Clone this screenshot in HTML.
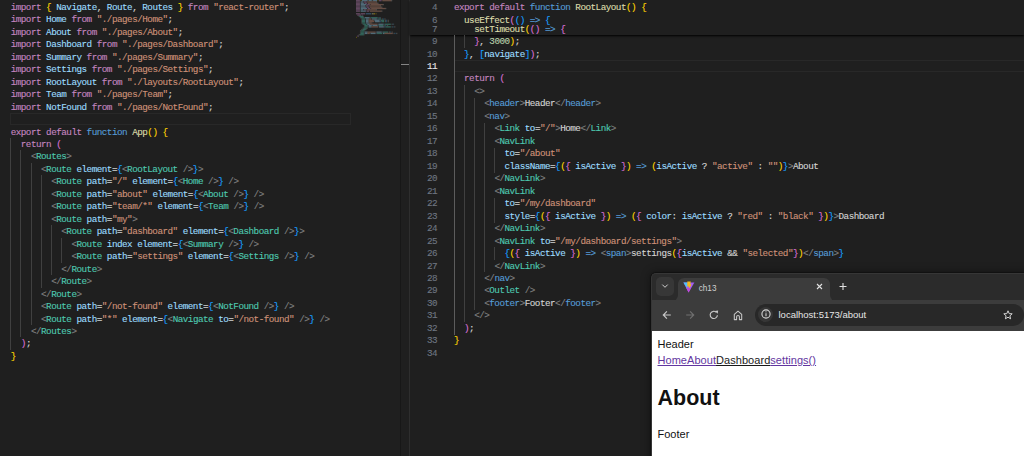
<!DOCTYPE html>
<html><head><meta charset="utf-8"><style>
*{margin:0;padding:0;box-sizing:border-box}
html,body{width:1024px;height:456px;overflow:hidden;background:#1f1f1f}
body{position:relative;font-family:"Liberation Mono",monospace}
.ln{position:absolute;-webkit-text-stroke:0.12px currentColor;white-space:pre;font-size:9.3px;line-height:12.47px;height:12.47px;letter-spacing:-0.52px}
.num{position:absolute;-webkit-text-stroke:0.12px currentColor;width:40px;text-align:right;white-space:pre;font-size:9.3px;line-height:12.47px;height:12.47px;letter-spacing:-0.52px;color:#6e7681}
.num.act{color:#e6e6e6}
.g{position:absolute;width:1px;background:#404040;z-index:2}
.ga{background:#5c5c5c}
.cur{position:absolute;border:1px solid #282828}
.mm{position:absolute;height:1.05px;opacity:.55}
#sticky{position:absolute;left:410px;top:0;width:614px;height:35px;background:#1f1f1f;overflow:hidden;box-shadow:0 1px 2px 0 #000}
.k{color:#c586c0}.f{color:#569cd6}.v{color:#9cdcfe}.s{color:#ce9178}.c{color:#4ec9b0}.y{color:#dcdcaa}
.g2{color:#808080}
.w{color:#d4d4d4}.n{color:#b5cea8}.b1{color:#ffd700}.b2{color:#da70d6}.b3{color:#179fff}
.mk{background:#c586c0}.mf{background:#569cd6}.mv{background:#9cdcfe}.ms{background:#ce9178}.mc{background:#4ec9b0}.my{background:#dcdcaa}
.mg{background:#808080}.mw{background:#cccccc}.mn{background:#b5cea8}.mb1{background:#ffd700}.mb2{background:#da70d6}.mb3{background:#179fff}
</style></head>
<body>
<div class="g" style="left:10px;top:137.97px;height:211.99px"></div>
<div class="g" style="left:20px;top:150.44px;height:187.05px"></div>
<div class="g" style="left:31px;top:162.91px;height:162.11px"></div>
<div class="g" style="left:41px;top:175.38px;height:112.23px"></div>
<div class="g" style="left:51px;top:225.26px;height:49.88px"></div>
<div class="g" style="left:61px;top:237.73px;height:24.94px"></div>
<div class="ln" style="left:10.7px;top:1.8px"><span class="k">import</span><span class="w"> </span><span class="b1">{</span><span class="w"> </span><span class="v">Navigate</span><span class="w">, </span><span class="v">Route</span><span class="w">, </span><span class="v">Routes</span><span class="w"> </span><span class="b1">}</span><span class="w"> </span><span class="k">from</span><span class="w"> </span><span class="s">"react-router"</span><span class="w">;</span></div>
<div class="ln" style="left:10.7px;top:14.27px"><span class="k">import</span><span class="w"> </span><span class="v">Home</span><span class="w"> </span><span class="k">from</span><span class="w"> </span><span class="s">"./pages/Home"</span><span class="w">;</span></div>
<div class="ln" style="left:10.7px;top:26.74px"><span class="k">import</span><span class="w"> </span><span class="v">About</span><span class="w"> </span><span class="k">from</span><span class="w"> </span><span class="s">"./pages/About"</span><span class="w">;</span></div>
<div class="ln" style="left:10.7px;top:39.21px"><span class="k">import</span><span class="w"> </span><span class="v">Dashboard</span><span class="w"> </span><span class="k">from</span><span class="w"> </span><span class="s">"./pages/Dashboard"</span><span class="w">;</span></div>
<div class="ln" style="left:10.7px;top:51.68px"><span class="k">import</span><span class="w"> </span><span class="v">Summary</span><span class="w"> </span><span class="k">from</span><span class="w"> </span><span class="s">"./pages/Summary"</span><span class="w">;</span></div>
<div class="ln" style="left:10.7px;top:64.15px"><span class="k">import</span><span class="w"> </span><span class="v">Settings</span><span class="w"> </span><span class="k">from</span><span class="w"> </span><span class="s">"./pages/Settings"</span><span class="w">;</span></div>
<div class="ln" style="left:10.7px;top:76.62px"><span class="k">import</span><span class="w"> </span><span class="v">RootLayout</span><span class="w"> </span><span class="k">from</span><span class="w"> </span><span class="s">"./layouts/RootLayout"</span><span class="w">;</span></div>
<div class="ln" style="left:10.7px;top:89.09px"><span class="k">import</span><span class="w"> </span><span class="v">Team</span><span class="w"> </span><span class="k">from</span><span class="w"> </span><span class="s">"./pages/Team"</span><span class="w">;</span></div>
<div class="ln" style="left:10.7px;top:101.56px"><span class="k">import</span><span class="w"> </span><span class="v">NotFound</span><span class="w"> </span><span class="k">from</span><span class="w"> </span><span class="s">"./pages/NotFound"</span><span class="w">;</span></div>
<div class="ln" style="left:10.7px;top:126.5px"><span class="k">export</span><span class="w"> </span><span class="k">default</span><span class="w"> </span><span class="f">function</span><span class="w"> </span><span class="y">App</span><span class="b1">()</span><span class="w"> </span><span class="b1">{</span></div>
<div class="ln" style="left:10.7px;top:138.97px"><span class="w">  </span><span class="k">return</span><span class="w"> </span><span class="b2">(</span></div>
<div class="ln" style="left:10.7px;top:151.44px"><span class="w">    </span><span class="g2">&lt;</span><span class="c">Routes</span><span class="g2">&gt;</span></div>
<div class="ln" style="left:10.7px;top:163.91px"><span class="w">      </span><span class="g2">&lt;</span><span class="c">Route</span><span class="w"> </span><span class="v">element</span><span class="w">=</span><span class="b3">{</span><span class="g2">&lt;</span><span class="c">RootLayout</span><span class="w"> </span><span class="g2">/&gt;</span><span class="b3">}</span><span class="g2">&gt;</span></div>
<div class="ln" style="left:10.7px;top:176.38px"><span class="w">        </span><span class="g2">&lt;</span><span class="c">Route</span><span class="w"> </span><span class="v">path</span><span class="w">=</span><span class="s">"/"</span><span class="w"> </span><span class="v">element</span><span class="w">=</span><span class="b3">{</span><span class="g2">&lt;</span><span class="c">Home</span><span class="w"> </span><span class="g2">/&gt;</span><span class="b3">}</span><span class="w"> </span><span class="g2">/&gt;</span></div>
<div class="ln" style="left:10.7px;top:188.85px"><span class="w">        </span><span class="g2">&lt;</span><span class="c">Route</span><span class="w"> </span><span class="v">path</span><span class="w">=</span><span class="s">"about"</span><span class="w"> </span><span class="v">element</span><span class="w">=</span><span class="b3">{</span><span class="g2">&lt;</span><span class="c">About</span><span class="w"> </span><span class="g2">/&gt;</span><span class="b3">}</span><span class="w"> </span><span class="g2">/&gt;</span></div>
<div class="ln" style="left:10.7px;top:201.32px"><span class="w">        </span><span class="g2">&lt;</span><span class="c">Route</span><span class="w"> </span><span class="v">path</span><span class="w">=</span><span class="s">"team/*"</span><span class="w"> </span><span class="v">element</span><span class="w">=</span><span class="b3">{</span><span class="g2">&lt;</span><span class="c">Team</span><span class="w"> </span><span class="g2">/&gt;</span><span class="b3">}</span><span class="w"> </span><span class="g2">/&gt;</span></div>
<div class="ln" style="left:10.7px;top:213.79px"><span class="w">        </span><span class="g2">&lt;</span><span class="c">Route</span><span class="w"> </span><span class="v">path</span><span class="w">=</span><span class="s">"my"</span><span class="g2">&gt;</span></div>
<div class="ln" style="left:10.7px;top:226.26px"><span class="w">          </span><span class="g2">&lt;</span><span class="c">Route</span><span class="w"> </span><span class="v">path</span><span class="w">=</span><span class="s">"dashboard"</span><span class="w"> </span><span class="v">element</span><span class="w">=</span><span class="b3">{</span><span class="g2">&lt;</span><span class="c">Dashboard</span><span class="w"> </span><span class="g2">/&gt;</span><span class="b3">}</span><span class="g2">&gt;</span></div>
<div class="ln" style="left:10.7px;top:238.73px"><span class="w">            </span><span class="g2">&lt;</span><span class="c">Route</span><span class="w"> </span><span class="v">index</span><span class="w"> </span><span class="v">element</span><span class="w">=</span><span class="b3">{</span><span class="g2">&lt;</span><span class="c">Summary</span><span class="w"> </span><span class="g2">/&gt;</span><span class="b3">}</span><span class="w"> </span><span class="g2">/&gt;</span></div>
<div class="ln" style="left:10.7px;top:251.2px"><span class="w">            </span><span class="g2">&lt;</span><span class="c">Route</span><span class="w"> </span><span class="v">path</span><span class="w">=</span><span class="s">"settings"</span><span class="w"> </span><span class="v">element</span><span class="w">=</span><span class="b3">{</span><span class="g2">&lt;</span><span class="c">Settings</span><span class="w"> </span><span class="g2">/&gt;</span><span class="b3">}</span><span class="w"> </span><span class="g2">/&gt;</span></div>
<div class="ln" style="left:10.7px;top:263.67px"><span class="w">          </span><span class="g2">&lt;/</span><span class="c">Route</span><span class="g2">&gt;</span></div>
<div class="ln" style="left:10.7px;top:276.14px"><span class="w">        </span><span class="g2">&lt;/</span><span class="c">Route</span><span class="g2">&gt;</span></div>
<div class="ln" style="left:10.7px;top:288.61px"><span class="w">      </span><span class="g2">&lt;/</span><span class="c">Route</span><span class="g2">&gt;</span></div>
<div class="ln" style="left:10.7px;top:301.08px"><span class="w">      </span><span class="g2">&lt;</span><span class="c">Route</span><span class="w"> </span><span class="v">path</span><span class="w">=</span><span class="s">"/not-found"</span><span class="w"> </span><span class="v">element</span><span class="w">=</span><span class="b3">{</span><span class="g2">&lt;</span><span class="c">NotFound</span><span class="w"> </span><span class="g2">/&gt;</span><span class="b3">}</span><span class="w"> </span><span class="g2">/&gt;</span></div>
<div class="ln" style="left:10.7px;top:313.55px"><span class="w">      </span><span class="g2">&lt;</span><span class="c">Route</span><span class="w"> </span><span class="v">path</span><span class="w">=</span><span class="s">"*"</span><span class="w"> </span><span class="v">element</span><span class="w">=</span><span class="b3">{</span><span class="g2">&lt;</span><span class="c">Navigate</span><span class="w"> </span><span class="v">to</span><span class="w">=</span><span class="s">"/not-found"</span><span class="w"> </span><span class="g2">/&gt;</span><span class="b3">}</span><span class="w"> </span><span class="g2">/&gt;</span></div>
<div class="ln" style="left:10.7px;top:326.02px"><span class="w">    </span><span class="g2">&lt;/</span><span class="c">Routes</span><span class="g2">&gt;</span></div>
<div class="ln" style="left:10.7px;top:338.49px"><span class="w">  </span><span class="b2">)</span><span class="w">;</span></div>
<div class="ln" style="left:10.7px;top:350.96px"><span class="b1">}</span></div>
<div class="cur" style="left:10px;top:113px;width:341px;height:12px"></div>
<div style="position:absolute;left:0;top:0;opacity:.4"><svg style="position:absolute;left:356px;top:0" width="46" height="40" viewBox="0 0 70 61" preserveAspectRatio="none"><rect x="0" y="0" width="6" height="2" fill="#c586c0"/><rect x="7" y="0" width="1" height="2" fill="#ffd700"/><rect x="9" y="0" width="8" height="2" fill="#9cdcfe"/><rect x="17" y="0" width="1" height="2" fill="#cccccc"/><rect x="19" y="0" width="5" height="2" fill="#9cdcfe"/><rect x="24" y="0" width="1" height="2" fill="#cccccc"/><rect x="26" y="0" width="6" height="2" fill="#9cdcfe"/><rect x="33" y="0" width="1" height="2" fill="#ffd700"/><rect x="35" y="0" width="4" height="2" fill="#c586c0"/><rect x="40" y="0" width="14" height="2" fill="#ce9178"/><rect x="54" y="0" width="1" height="2" fill="#cccccc"/><rect x="0" y="2" width="6" height="2" fill="#c586c0"/><rect x="7" y="2" width="4" height="2" fill="#9cdcfe"/><rect x="12" y="2" width="4" height="2" fill="#c586c0"/><rect x="17" y="2" width="14" height="2" fill="#ce9178"/><rect x="31" y="2" width="1" height="2" fill="#cccccc"/><rect x="0" y="4" width="6" height="2" fill="#c586c0"/><rect x="7" y="4" width="5" height="2" fill="#9cdcfe"/><rect x="13" y="4" width="4" height="2" fill="#c586c0"/><rect x="18" y="4" width="15" height="2" fill="#ce9178"/><rect x="33" y="4" width="1" height="2" fill="#cccccc"/><rect x="0" y="6" width="6" height="2" fill="#c586c0"/><rect x="7" y="6" width="9" height="2" fill="#9cdcfe"/><rect x="17" y="6" width="4" height="2" fill="#c586c0"/><rect x="22" y="6" width="19" height="2" fill="#ce9178"/><rect x="41" y="6" width="1" height="2" fill="#cccccc"/><rect x="0" y="8" width="6" height="2" fill="#c586c0"/><rect x="7" y="8" width="7" height="2" fill="#9cdcfe"/><rect x="15" y="8" width="4" height="2" fill="#c586c0"/><rect x="20" y="8" width="17" height="2" fill="#ce9178"/><rect x="37" y="8" width="1" height="2" fill="#cccccc"/><rect x="0" y="10" width="6" height="2" fill="#c586c0"/><rect x="7" y="10" width="8" height="2" fill="#9cdcfe"/><rect x="16" y="10" width="4" height="2" fill="#c586c0"/><rect x="21" y="10" width="18" height="2" fill="#ce9178"/><rect x="39" y="10" width="1" height="2" fill="#cccccc"/><rect x="0" y="12" width="6" height="2" fill="#c586c0"/><rect x="7" y="12" width="10" height="2" fill="#9cdcfe"/><rect x="18" y="12" width="4" height="2" fill="#c586c0"/><rect x="23" y="12" width="22" height="2" fill="#ce9178"/><rect x="45" y="12" width="1" height="2" fill="#cccccc"/><rect x="0" y="14" width="6" height="2" fill="#c586c0"/><rect x="7" y="14" width="4" height="2" fill="#9cdcfe"/><rect x="12" y="14" width="4" height="2" fill="#c586c0"/><rect x="17" y="14" width="14" height="2" fill="#ce9178"/><rect x="31" y="14" width="1" height="2" fill="#cccccc"/><rect x="0" y="16" width="6" height="2" fill="#c586c0"/><rect x="7" y="16" width="8" height="2" fill="#9cdcfe"/><rect x="16" y="16" width="4" height="2" fill="#c586c0"/><rect x="21" y="16" width="18" height="2" fill="#ce9178"/><rect x="39" y="16" width="1" height="2" fill="#cccccc"/><rect x="0" y="20" width="6" height="2" fill="#c586c0"/><rect x="7" y="20" width="7" height="2" fill="#c586c0"/><rect x="15" y="20" width="8" height="2" fill="#569cd6"/><rect x="24" y="20" width="3" height="2" fill="#dcdcaa"/><rect x="27" y="20" width="2" height="2" fill="#ffd700"/><rect x="30" y="20" width="1" height="2" fill="#ffd700"/><rect x="2" y="22" width="6" height="2" fill="#c586c0"/><rect x="9" y="22" width="1" height="2" fill="#da70d6"/><rect x="4" y="24" width="1" height="2" fill="#808080"/><rect x="5" y="24" width="6" height="2" fill="#4ec9b0"/><rect x="11" y="24" width="1" height="2" fill="#808080"/><rect x="6" y="26" width="1" height="2" fill="#808080"/><rect x="7" y="26" width="5" height="2" fill="#4ec9b0"/><rect x="13" y="26" width="7" height="2" fill="#9cdcfe"/><rect x="20" y="26" width="1" height="2" fill="#cccccc"/><rect x="21" y="26" width="1" height="2" fill="#179fff"/><rect x="22" y="26" width="1" height="2" fill="#808080"/><rect x="23" y="26" width="10" height="2" fill="#4ec9b0"/><rect x="34" y="26" width="2" height="2" fill="#808080"/><rect x="36" y="26" width="1" height="2" fill="#179fff"/><rect x="37" y="26" width="1" height="2" fill="#808080"/><rect x="8" y="28" width="1" height="2" fill="#808080"/><rect x="9" y="28" width="5" height="2" fill="#4ec9b0"/><rect x="15" y="28" width="4" height="2" fill="#9cdcfe"/><rect x="19" y="28" width="1" height="2" fill="#cccccc"/><rect x="20" y="28" width="3" height="2" fill="#ce9178"/><rect x="24" y="28" width="7" height="2" fill="#9cdcfe"/><rect x="31" y="28" width="1" height="2" fill="#cccccc"/><rect x="32" y="28" width="1" height="2" fill="#179fff"/><rect x="33" y="28" width="1" height="2" fill="#808080"/><rect x="34" y="28" width="4" height="2" fill="#4ec9b0"/><rect x="39" y="28" width="2" height="2" fill="#808080"/><rect x="41" y="28" width="1" height="2" fill="#179fff"/><rect x="43" y="28" width="2" height="2" fill="#808080"/><rect x="8" y="30" width="1" height="2" fill="#808080"/><rect x="9" y="30" width="5" height="2" fill="#4ec9b0"/><rect x="15" y="30" width="4" height="2" fill="#9cdcfe"/><rect x="19" y="30" width="1" height="2" fill="#cccccc"/><rect x="20" y="30" width="7" height="2" fill="#ce9178"/><rect x="28" y="30" width="7" height="2" fill="#9cdcfe"/><rect x="35" y="30" width="1" height="2" fill="#cccccc"/><rect x="36" y="30" width="1" height="2" fill="#179fff"/><rect x="37" y="30" width="1" height="2" fill="#808080"/><rect x="38" y="30" width="5" height="2" fill="#4ec9b0"/><rect x="44" y="30" width="2" height="2" fill="#808080"/><rect x="46" y="30" width="1" height="2" fill="#179fff"/><rect x="48" y="30" width="2" height="2" fill="#808080"/><rect x="8" y="32" width="1" height="2" fill="#808080"/><rect x="9" y="32" width="5" height="2" fill="#4ec9b0"/><rect x="15" y="32" width="4" height="2" fill="#9cdcfe"/><rect x="19" y="32" width="1" height="2" fill="#cccccc"/><rect x="20" y="32" width="8" height="2" fill="#ce9178"/><rect x="29" y="32" width="7" height="2" fill="#9cdcfe"/><rect x="36" y="32" width="1" height="2" fill="#cccccc"/><rect x="37" y="32" width="1" height="2" fill="#179fff"/><rect x="38" y="32" width="1" height="2" fill="#808080"/><rect x="39" y="32" width="4" height="2" fill="#4ec9b0"/><rect x="44" y="32" width="2" height="2" fill="#808080"/><rect x="46" y="32" width="1" height="2" fill="#179fff"/><rect x="48" y="32" width="2" height="2" fill="#808080"/><rect x="8" y="34" width="1" height="2" fill="#808080"/><rect x="9" y="34" width="5" height="2" fill="#4ec9b0"/><rect x="15" y="34" width="4" height="2" fill="#9cdcfe"/><rect x="19" y="34" width="1" height="2" fill="#cccccc"/><rect x="20" y="34" width="4" height="2" fill="#ce9178"/><rect x="24" y="34" width="1" height="2" fill="#808080"/><rect x="10" y="36" width="1" height="2" fill="#808080"/><rect x="11" y="36" width="5" height="2" fill="#4ec9b0"/><rect x="17" y="36" width="4" height="2" fill="#9cdcfe"/><rect x="21" y="36" width="1" height="2" fill="#cccccc"/><rect x="22" y="36" width="11" height="2" fill="#ce9178"/><rect x="34" y="36" width="7" height="2" fill="#9cdcfe"/><rect x="41" y="36" width="1" height="2" fill="#cccccc"/><rect x="42" y="36" width="1" height="2" fill="#179fff"/><rect x="43" y="36" width="1" height="2" fill="#808080"/><rect x="44" y="36" width="9" height="2" fill="#4ec9b0"/><rect x="54" y="36" width="2" height="2" fill="#808080"/><rect x="56" y="36" width="1" height="2" fill="#179fff"/><rect x="57" y="36" width="1" height="2" fill="#808080"/><rect x="12" y="38" width="1" height="2" fill="#808080"/><rect x="13" y="38" width="5" height="2" fill="#4ec9b0"/><rect x="19" y="38" width="5" height="2" fill="#9cdcfe"/><rect x="25" y="38" width="7" height="2" fill="#9cdcfe"/><rect x="32" y="38" width="1" height="2" fill="#cccccc"/><rect x="33" y="38" width="1" height="2" fill="#179fff"/><rect x="34" y="38" width="1" height="2" fill="#808080"/><rect x="35" y="38" width="7" height="2" fill="#4ec9b0"/><rect x="43" y="38" width="2" height="2" fill="#808080"/><rect x="45" y="38" width="1" height="2" fill="#179fff"/><rect x="47" y="38" width="2" height="2" fill="#808080"/><rect x="12" y="40" width="1" height="2" fill="#808080"/><rect x="13" y="40" width="5" height="2" fill="#4ec9b0"/><rect x="19" y="40" width="4" height="2" fill="#9cdcfe"/><rect x="23" y="40" width="1" height="2" fill="#cccccc"/><rect x="24" y="40" width="10" height="2" fill="#ce9178"/><rect x="35" y="40" width="7" height="2" fill="#9cdcfe"/><rect x="42" y="40" width="1" height="2" fill="#cccccc"/><rect x="43" y="40" width="1" height="2" fill="#179fff"/><rect x="44" y="40" width="1" height="2" fill="#808080"/><rect x="45" y="40" width="8" height="2" fill="#4ec9b0"/><rect x="54" y="40" width="2" height="2" fill="#808080"/><rect x="56" y="40" width="1" height="2" fill="#179fff"/><rect x="58" y="40" width="2" height="2" fill="#808080"/><rect x="10" y="42" width="2" height="2" fill="#808080"/><rect x="12" y="42" width="5" height="2" fill="#4ec9b0"/><rect x="17" y="42" width="1" height="2" fill="#808080"/><rect x="8" y="44" width="2" height="2" fill="#808080"/><rect x="10" y="44" width="5" height="2" fill="#4ec9b0"/><rect x="15" y="44" width="1" height="2" fill="#808080"/><rect x="6" y="46" width="2" height="2" fill="#808080"/><rect x="8" y="46" width="5" height="2" fill="#4ec9b0"/><rect x="13" y="46" width="1" height="2" fill="#808080"/><rect x="6" y="48" width="1" height="2" fill="#808080"/><rect x="7" y="48" width="5" height="2" fill="#4ec9b0"/><rect x="13" y="48" width="4" height="2" fill="#9cdcfe"/><rect x="17" y="48" width="1" height="2" fill="#cccccc"/><rect x="18" y="48" width="12" height="2" fill="#ce9178"/><rect x="31" y="48" width="7" height="2" fill="#9cdcfe"/><rect x="38" y="48" width="1" height="2" fill="#cccccc"/><rect x="39" y="48" width="1" height="2" fill="#179fff"/><rect x="40" y="48" width="1" height="2" fill="#808080"/><rect x="41" y="48" width="8" height="2" fill="#4ec9b0"/><rect x="50" y="48" width="2" height="2" fill="#808080"/><rect x="52" y="48" width="1" height="2" fill="#179fff"/><rect x="54" y="48" width="2" height="2" fill="#808080"/><rect x="6" y="50" width="1" height="2" fill="#808080"/><rect x="7" y="50" width="5" height="2" fill="#4ec9b0"/><rect x="13" y="50" width="4" height="2" fill="#9cdcfe"/><rect x="17" y="50" width="1" height="2" fill="#cccccc"/><rect x="18" y="50" width="3" height="2" fill="#ce9178"/><rect x="22" y="50" width="7" height="2" fill="#9cdcfe"/><rect x="29" y="50" width="1" height="2" fill="#cccccc"/><rect x="30" y="50" width="1" height="2" fill="#179fff"/><rect x="31" y="50" width="1" height="2" fill="#808080"/><rect x="32" y="50" width="8" height="2" fill="#4ec9b0"/><rect x="41" y="50" width="2" height="2" fill="#9cdcfe"/><rect x="43" y="50" width="1" height="2" fill="#cccccc"/><rect x="44" y="50" width="12" height="2" fill="#ce9178"/><rect x="57" y="50" width="2" height="2" fill="#808080"/><rect x="59" y="50" width="1" height="2" fill="#179fff"/><rect x="61" y="50" width="2" height="2" fill="#808080"/><rect x="4" y="52" width="2" height="2" fill="#808080"/><rect x="6" y="52" width="6" height="2" fill="#4ec9b0"/><rect x="12" y="52" width="1" height="2" fill="#808080"/><rect x="2" y="54" width="1" height="2" fill="#da70d6"/><rect x="3" y="54" width="1" height="2" fill="#cccccc"/><rect x="0" y="56" width="1" height="2" fill="#ffd700"/></svg></div>
<div style="position:absolute;left:400px;top:0;width:1px;height:456px;background:#171717"></div>
<div style="position:absolute;left:409px;top:0;width:1px;height:456px;background:#2e2e2e"></div>
<div style="position:absolute;left:401px;top:64.2px;width:8px;height:1.3px;background:#858585"></div>
<div class="g ga" style="left:454px;top:35.46px;height:299.28px"></div>
<div class="g" style="left:464px;top:35.46px;height:12.47px"></div>
<div class="g" style="left:464px;top:85.34px;height:236.93px"></div>
<div class="g" style="left:474px;top:97.81px;height:211.99px"></div>
<div class="g" style="left:484px;top:122.75px;height:149.64px"></div>
<div class="g" style="left:494px;top:147.69px;height:24.94px"></div>
<div class="g" style="left:494px;top:197.57px;height:24.94px"></div>
<div class="g" style="left:494px;top:247.45px;height:12.47px"></div>
<div class="num" style="left:397px;top:36.06px">9</div>
<div class="ln" style="left:453.9px;top:36.06px"><span class="w">    </span><span class="b2">}</span><span class="w">, </span><span class="n">3000</span><span class="b1">)</span><span class="w">;</span></div>
<div class="num" style="left:397px;top:48.53px">10</div>
<div class="ln" style="left:453.9px;top:48.53px"><span class="w">  </span><span class="b3">}</span><span class="w">, </span><span class="b3">[</span><span class="v">navigate</span><span class="b3">]</span><span class="b2">)</span><span class="w">;</span></div>
<div class="num act" style="left:397px;top:61px">11</div>
<div class="num" style="left:397px;top:73.47px">12</div>
<div class="ln" style="left:453.9px;top:73.47px"><span class="w">  </span><span class="k">return</span><span class="w"> </span><span class="b2">(</span></div>
<div class="num" style="left:397px;top:85.94px">13</div>
<div class="ln" style="left:453.9px;top:85.94px"><span class="w">    </span><span class="g2">&lt;&gt;</span></div>
<div class="num" style="left:397px;top:98.41px">14</div>
<div class="ln" style="left:453.9px;top:98.41px"><span class="w">      </span><span class="g2">&lt;</span><span class="f">header</span><span class="g2">&gt;</span><span class="w">Header</span><span class="g2">&lt;/</span><span class="f">header</span><span class="g2">&gt;</span></div>
<div class="num" style="left:397px;top:110.88px">15</div>
<div class="ln" style="left:453.9px;top:110.88px"><span class="w">      </span><span class="g2">&lt;</span><span class="f">nav</span><span class="g2">&gt;</span></div>
<div class="num" style="left:397px;top:123.35px">16</div>
<div class="ln" style="left:453.9px;top:123.35px"><span class="w">        </span><span class="g2">&lt;</span><span class="c">Link</span><span class="w"> </span><span class="v">to</span><span class="w">=</span><span class="s">"/"</span><span class="g2">&gt;</span><span class="w">Home</span><span class="g2">&lt;/</span><span class="c">Link</span><span class="g2">&gt;</span></div>
<div class="num" style="left:397px;top:135.82px">17</div>
<div class="ln" style="left:453.9px;top:135.82px"><span class="w">        </span><span class="g2">&lt;</span><span class="c">NavLink</span></div>
<div class="num" style="left:397px;top:148.29px">18</div>
<div class="ln" style="left:453.9px;top:148.29px"><span class="w">          </span><span class="v">to</span><span class="w">=</span><span class="s">"/about"</span></div>
<div class="num" style="left:397px;top:160.76px">19</div>
<div class="ln" style="left:453.9px;top:160.76px"><span class="w">          </span><span class="v">className</span><span class="w">=</span><span class="b3">{</span><span class="b1">(</span><span class="b2">{</span><span class="w"> </span><span class="v">isActive</span><span class="w"> </span><span class="b2">}</span><span class="b1">)</span><span class="w"> </span><span class="f">=&gt;</span><span class="w"> </span><span class="b1">(</span><span class="v">isActive</span><span class="w"> ? </span><span class="s">"active"</span><span class="w"> : </span><span class="s">""</span><span class="b1">)</span><span class="b3">}</span><span class="g2">&gt;</span><span class="w">About</span></div>
<div class="num" style="left:397px;top:173.23px">20</div>
<div class="ln" style="left:453.9px;top:173.23px"><span class="w">        </span><span class="g2">&lt;/</span><span class="c">NavLink</span><span class="g2">&gt;</span></div>
<div class="num" style="left:397px;top:185.7px">21</div>
<div class="ln" style="left:453.9px;top:185.7px"><span class="w">        </span><span class="g2">&lt;</span><span class="c">NavLink</span></div>
<div class="num" style="left:397px;top:198.17px">22</div>
<div class="ln" style="left:453.9px;top:198.17px"><span class="w">          </span><span class="v">to</span><span class="w">=</span><span class="s">"/my/dashboard"</span></div>
<div class="num" style="left:397px;top:210.64px">23</div>
<div class="ln" style="left:453.9px;top:210.64px"><span class="w">          </span><span class="v">style</span><span class="w">=</span><span class="b3">{</span><span class="b1">(</span><span class="b2">{</span><span class="w"> </span><span class="v">isActive</span><span class="w"> </span><span class="b2">}</span><span class="b1">)</span><span class="w"> </span><span class="f">=&gt;</span><span class="w"> </span><span class="b1">(</span><span class="b2">{</span><span class="w"> </span><span class="v">color</span><span class="w">: </span><span class="v">isActive</span><span class="w"> ? </span><span class="s">"red"</span><span class="w"> : </span><span class="s">"black"</span><span class="w"> </span><span class="b2">}</span><span class="b1">)</span><span class="b3">}</span><span class="g2">&gt;</span><span class="w">Dashboard</span></div>
<div class="num" style="left:397px;top:223.11px">24</div>
<div class="ln" style="left:453.9px;top:223.11px"><span class="w">        </span><span class="g2">&lt;/</span><span class="c">NavLink</span><span class="g2">&gt;</span></div>
<div class="num" style="left:397px;top:235.58px">25</div>
<div class="ln" style="left:453.9px;top:235.58px"><span class="w">        </span><span class="g2">&lt;</span><span class="c">NavLink</span><span class="w"> </span><span class="v">to</span><span class="w">=</span><span class="s">"/my/dashboard/settings"</span><span class="g2">&gt;</span></div>
<div class="num" style="left:397px;top:248.05px">26</div>
<div class="ln" style="left:453.9px;top:248.05px"><span class="w">          </span><span class="b3">{</span><span class="b1">(</span><span class="b2">{</span><span class="w"> </span><span class="v">isActive</span><span class="w"> </span><span class="b2">}</span><span class="b1">)</span><span class="w"> </span><span class="f">=&gt;</span><span class="w"> </span><span class="g2">&lt;</span><span class="f">span</span><span class="g2">&gt;</span><span class="w">settings</span><span class="b1">(</span><span class="b2">{</span><span class="v">isActive</span><span class="w"> &amp;&amp; </span><span class="s">"selected"</span><span class="b2">}</span><span class="b1">)</span><span class="g2">&lt;/</span><span class="f">span</span><span class="g2">&gt;</span><span class="b3">}</span></div>
<div class="num" style="left:397px;top:260.52px">27</div>
<div class="ln" style="left:453.9px;top:260.52px"><span class="w">        </span><span class="g2">&lt;/</span><span class="c">NavLink</span><span class="g2">&gt;</span></div>
<div class="num" style="left:397px;top:272.99px">28</div>
<div class="ln" style="left:453.9px;top:272.99px"><span class="w">      </span><span class="g2">&lt;/</span><span class="f">nav</span><span class="g2">&gt;</span></div>
<div class="num" style="left:397px;top:285.46px">29</div>
<div class="ln" style="left:453.9px;top:285.46px"><span class="w">      </span><span class="g2">&lt;</span><span class="c">Outlet</span><span class="w"> </span><span class="g2">/&gt;</span></div>
<div class="num" style="left:397px;top:297.93px">30</div>
<div class="ln" style="left:453.9px;top:297.93px"><span class="w">      </span><span class="g2">&lt;</span><span class="f">footer</span><span class="g2">&gt;</span><span class="w">Footer</span><span class="g2">&lt;/</span><span class="f">footer</span><span class="g2">&gt;</span></div>
<div class="num" style="left:397px;top:310.4px">31</div>
<div class="ln" style="left:453.9px;top:310.4px"><span class="w">    </span><span class="g2">&lt;/&gt;</span></div>
<div class="num" style="left:397px;top:322.87px">32</div>
<div class="ln" style="left:453.9px;top:322.87px"><span class="w">  </span><span class="b2">)</span><span class="w">;</span></div>
<div class="num" style="left:397px;top:335.34px">33</div>
<div class="ln" style="left:453.9px;top:335.34px"><span class="b1">}</span></div>
<div class="num" style="left:397px;top:347.81px">34</div>
<div class="cur" style="left:454px;top:60px;width:580px;height:12px"></div>
<div id="sticky"><div class="num" style="left:-13px;top:1.8px">4</div><div class="ln" style="left:43.9px;top:1.8px"><span class="k">export</span><span class="w"> </span><span class="k">default</span><span class="w"> </span><span class="f">function</span><span class="w"> </span><span class="y">RootLayout</span><span class="b1">()</span><span class="w"> </span><span class="b1">{</span></div><div class="num" style="left:-13px;top:14.6px">6</div><div class="ln" style="left:43.9px;top:14.6px"><span class="w">  </span><span class="y">useEffect</span><span class="b2">(</span><span class="b3">()</span><span class="w"> </span><span class="f">=&gt;</span><span class="w"> </span><span class="b3">{</span></div><div class="num" style="left:-13px;top:24.1px">7</div><div class="ln" style="left:43.9px;top:24.1px"><span class="w">    </span><span class="y">setTimeout</span><span class="b1">(</span><span class="b2">()</span><span class="w"> </span><span class="f">=&gt;</span><span class="w"> </span><span class="b2">{</span></div></div>
<style>
#win{position:absolute;left:650.5px;top:273px;width:380px;height:190px;border-radius:5px 0 0 0;background:#2b2b2b;box-shadow:0 0 1px 1px rgba(0,0,0,.35),0 0 8px 2px rgba(0,0,0,.3);overflow:hidden;font-family:"Liberation Sans",sans-serif;border-left:1px solid #363636;border-top:1px solid #363636}
#toolbar{position:absolute;left:0;top:26px;width:380px;height:31px;background:#3c3c3c}
#tabsearch{position:absolute;left:4px;top:3px;width:18.5px;height:19px;border-radius:5px;background:#373737}
#tab{position:absolute;left:26px;top:3.5px;width:152.5px;height:30px;background:#3c3c3c;border-radius:6px 6px 0 0}
#flareL{position:absolute;left:20px;top:21px;width:6px;height:6px;background:#3c3c3c}
#flareL:after{content:"";position:absolute;left:0;top:0;width:6px;height:6px;border-radius:0 0 6px 0;background:#2b2b2b}
#flareR{position:absolute;left:178.5px;top:21px;width:6px;height:6px;background:#3c3c3c}
#flareR:after{content:"";position:absolute;left:0;top:0;width:6px;height:6px;border-radius:0 0 0 6px;background:#2b2b2b}
#omni{position:absolute;left:103.5px;top:3.8px;width:268.5px;height:21.8px;border-radius:11px;background:#282828}
#infob{position:absolute;left:3px;top:2.9px;width:15.3px;height:15.3px;border-radius:50%;background:#363636}
#url{position:absolute;left:23.5px;top:4.1px;font-size:9.5px;line-height:14px;color:#e6e6e6;white-space:pre}
#title{position:absolute;left:47.2px;top:10.2px;font-size:8.2px;line-height:10px;color:#d0d0d0}
#content{position:absolute;left:0;top:56.5px;width:380px;height:140px;background:#fff;color:#000}
#content div{position:absolute;left:6px;white-space:pre;color:#111}
#content u{text-decoration-thickness:0.8px;text-underline-offset:1px}
.ic{position:absolute}
</style>
<div id="win">
  <div id="tabsearch"></div>
  <svg class="ic" style="left:9.5px;top:8.8px" width="8" height="6" viewBox="0 0 8 6"><path d="M1.3 1.6 L4 4.3 L6.7 1.6" fill="none" stroke="#d0d0d0" stroke-width="1"/></svg>
  <div id="tab"></div>
  <div id="flareL"></div>
  <div id="flareR"></div>
  <svg class="ic" style="left:31px;top:7px" width="12" height="12" viewBox="0 0 12 12">
    <path d="M0.4 1.6 L11.4 1.6 L5.6 11.6 Z" fill="#a35cf0"/>
    <path d="M3.2 7 L8 7 L5.6 11.6 Z" fill="#c04ad8"/>
    <path d="M0.4 1.6 L4.6 1.6 L4.2 7.2 Z" fill="#4cc4f7"/>
    <path d="M4.3 0.4 L7.8 0.4 L7.3 3.3 L8.4 3.3 L7.6 5.4 L5.8 7.4 L5.9 5.6 L4.3 5.6 Z" fill="#f2b81a"/>
  </svg>
  <div id="title">ch13</div>
  <svg class="ic" style="left:164px;top:9px" width="7" height="7" viewBox="0 0 7 7"><path d="M1 1 L6 6 M6 1 L1 6" stroke="#e0e0e0" stroke-width="1.1"/></svg>
  <svg class="ic" style="left:187.5px;top:8.3px" width="8" height="9" viewBox="0 0 8 8"><path d="M4 0.5 V7.5 M0.5 4 H7.5" stroke="#e0e0e0" stroke-width="1.1"/></svg>
  <div id="toolbar">
    <svg class="ic" style="left:10px;top:9.5px" width="10" height="10" viewBox="0 0 10 10"><path d="M8.8 5 H1.6 M4.9 1.4 L1.3 5 L4.9 8.6" fill="none" stroke="#c8c8c8" stroke-width="1.15"/></svg>
    <svg class="ic" style="left:33px;top:9.5px" width="10" height="10" viewBox="0 0 10 10"><path d="M1.2 5 H8.4 M5.1 1.4 L8.7 5 L5.1 8.6" fill="none" stroke="#707070" stroke-width="1.15"/></svg>
    <svg class="ic" style="left:57.5px;top:10px" width="10" height="10" viewBox="0 0 10 10"><path d="M8.4 5.2 A3.6 3.6 0 1 1 7.3 2.3" fill="none" stroke="#c8c8c8" stroke-width="1.15"/><path d="M5.9 1.0 L9.1 0.6 L8.7 3.8 Z" fill="#c8c8c8"/></svg>
    <svg class="ic" style="left:81.5px;top:9.8px" width="10" height="11" viewBox="0 0 10 11"><path d="M1.3 9.6 V4.3 L5 1.2 L8.7 4.3 V9.6 H6.4 V6.8 A1.4 1.4 0 0 0 3.6 6.8 V9.6 Z" fill="none" stroke="#c8c8c8" stroke-width="1.05" stroke-linejoin="round"/></svg>
    <div id="omni">
      <div id="infob"></div>
      <svg class="ic" style="left:5.8px;top:5.7px" width="10" height="10" viewBox="0 0 10 10"><circle cx="5" cy="5" r="4.1" fill="none" stroke="#d4d4d4" stroke-width="1.1"/><path d="M5 4.3 V7.3" stroke="#d4d4d4" stroke-width="1.1"/><circle cx="5" cy="2.8" r="0.6" fill="#d4d4d4"/></svg>
      <div id="url">localhost:5173/about</div>
      <svg class="ic" style="left:248px;top:5.8px" width="10" height="10" viewBox="0 0 10 10"><path d="M5 0.8 L6.2 3.6 L9.2 3.8 L6.9 5.8 L7.6 8.8 L5 7.2 L2.4 8.8 L3.1 5.8 L0.8 3.8 L3.8 3.6 Z" fill="none" stroke="#d4d4d4" stroke-width="1" stroke-linejoin="round"/></svg>
    </div>
  </div>
  <div id="content">
    <div style="top:6.5px;font-size:11px;line-height:14px">Header</div>
    <div style="top:22.3px;font-size:11px;line-height:14px;letter-spacing:0.05px"><u style="color:#6236a0">HomeAbout</u><u style="color:#1a1a1a">Dashboard</u><u style="color:#6236a0">settings()</u></div>
    <div style="top:54px;font-size:21.5px;line-height:26px;font-weight:bold;transform:scaleY(1.06);transform-origin:0 100%">About</div>
    <div style="top:96.5px;font-size:11px;line-height:14px">Footer</div>
  </div>
</div>

</body></html>
